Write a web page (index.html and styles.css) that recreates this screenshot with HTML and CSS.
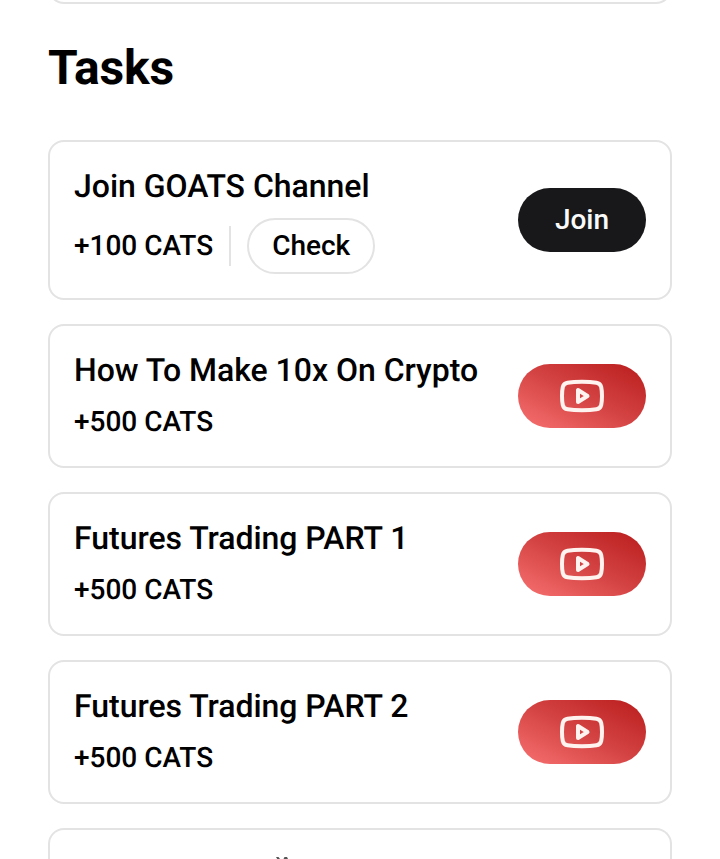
FILE: index.html
```html
<!DOCTYPE html>
<html lang="en">
<head>
  <meta charset="UTF-8" />
  <meta name="viewport" content="width=device-width, initial-scale=1" />
  <title>Tasks</title>
  <link rel="stylesheet" href="styles.css">
</head>
<body>

  <svg class="sprite" width="0" height="0">
    <symbol id="youtube" viewBox="0 0 48 48">
      <path d="M4 24c0-3.700.3-6.700.8-9 .6-2.500 2.100-3.900 4.700-4.300C13.400 10.100 18.500 9.800 24 9.800s10.600.3 14.500.9c2.600.4 4.100 1.800 4.700 4.300.5 2.300.8 5.300.8 9s-.3 6.700-.8 9c-.6 2.500-2.100 3.900-4.700 4.300-3.900.6-9 .9-14.500.9s-10.600-.3-14.500-.9c-2.600-.4-4.100-1.800-4.700-4.300C4.300 30.700 4 27.700 4 24z" />
      <path d="M20 18v12l9.500-6z" />
    </symbol>
  </svg>

  <div class="container">
    <div class="card previous"></div>

    <h1>Tasks</h1>

    <div class="task-list">
      <div class="card">
        <div class="task-info">
          <h2>Join GOATS Channel</h2>
          <div class="task-meta">
            <span class="reward">+100 CATS</span>
            <span class="divider"></span>
            <button class="check-btn">Check</button>
          </div>
        </div>
        <button class="action-btn">Join</button>
      </div>

      <div class="card">
        <div class="task-info">
          <h2>How To Make 10x On Crypto</h2>
          <div class="reward">+500 CATS</div>
        </div>
        <button class="action-btn youtube" aria-label="Watch">
          <svg class="icon"><use href="#youtube" /></svg>
        </button>
      </div>

      <div class="card">
        <div class="task-info">
          <h2>Futures Trading PART 1</h2>
          <div class="reward">+500 CATS</div>
        </div>
        <button class="action-btn youtube" aria-label="Watch">
          <svg class="icon"><use href="#youtube" /></svg>
        </button>
      </div>

      <div class="card">
        <div class="task-info">
          <h2>Futures Trading PART 2</h2>
          <div class="reward">+500 CATS</div>
        </div>
        <button class="action-btn youtube" aria-label="Watch">
          <svg class="icon"><use href="#youtube" /></svg>
        </button>
      </div>

      <div class="card next">
        <svg class="peek" viewBox="0 0 16 5">
          <path d="M2 3h2.500l1.500 2h-2.800zM10.500 3h2.500l1 2h-4.500z" />
        </svg>
      </div>
    </div>
  </div>

</body>
</html>
```
FILE: styles.css
```css
* {
  box-sizing: border-box;
}
body {
  margin: 0;
  background: #fff;
  color: #000;
  font-family: Roboto, sans-serif;
  text-rendering: geometricPrecision;
}
.sprite {
  display: block;
}
.container {
  height: 859px;
  padding: 0 48px;
  overflow: hidden;
}
h1 {
  margin: 36px 0 44px;
  font-size: 48px;
  line-height: 56px;
  font-weight: 700;
  letter-spacing: -0.2px;
}
.task-list {
  display: flex;
  flex-direction: column;
  gap: 24px;
}
.card {
  display: flex;
  align-items: center;
  justify-content: space-between;
  padding: 24px;
  border: 2px solid #e3e3e3;
  border-radius: 16px;
}
.card.previous {
  height: 160px;
  margin-top: -156px;
}
.card.next {
  height: 31px;
  padding-bottom: 0;
  border-bottom: none;
  border-radius: 16px 16px 0 0;
  align-items: flex-start;
}
.task-info {
  display: flex;
  flex-direction: column;
  gap: 12px;
}
h2 {
  margin: 0;
  font-size: 32px;
  line-height: 40px;
  font-weight: 500;
  letter-spacing: -0.03px;
  white-space: nowrap;
}
.reward {
  font-size: 28px;
  line-height: 40px;
  font-weight: 500;
}
.task-meta {
  display: flex;
  align-items: center;
  gap: 16px;
}
.divider {
  width: 2px;
  height: 40px;
  background: #e3e3e3;
}
.check-btn {
  width: 128px;
  height: 56px;
  padding: 0;
  border: 2px solid #e3e3e3;
  border-radius: 28px;
  background: #fff;
  color: #000;
  font: 500 28px/40px Roboto, sans-serif;
}
.action-btn {
  display: flex;
  align-items: center;
  justify-content: center;
  width: 128px;
  height: 64px;
  padding: 0;
  border: none;
  border-radius: 32px;
  background: #18181b;
  color: #fafafa;
  font: 500 28px/40px Roboto, sans-serif;
}
.action-btn.youtube {
  background: linear-gradient(to top right, #f87171, #d44343 50%, #b91c1c);
}
.icon {
  width: 48px;
  height: 48px;
  fill: none;
  stroke: #fff3f0;
  stroke-width: 4;
  stroke-linejoin: round;
}
.peek {
  width: 16px;
  height: 5px;
  margin-left: 200px;
  fill: #555;
}
```
